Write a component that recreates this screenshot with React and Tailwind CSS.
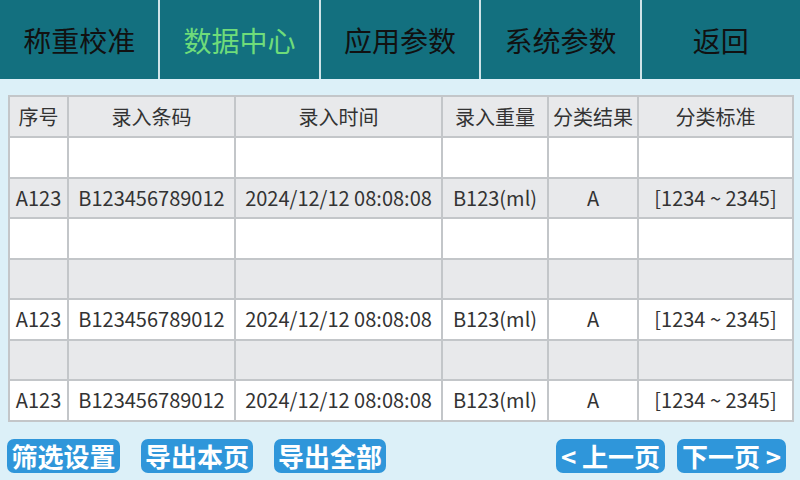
const tabs = ["称重校准", "数据中心", "应用参数", "系统参数", "返回"];

const cols = [
  { title: "序号", w: "w-[59px]" },
  { title: "录入条码", w: "w-[167px]" },
  { title: "录入时间", w: "w-[207px]" },
  { title: "录入重量", w: "w-[106px]" },
  { title: "分类结果", w: "w-[90px]" },
  { title: "分类标准", w: "w-[155px]" },
];

const filled = ["A123", "B123456789012", "2024/12/12 08:08:08", "B123(ml)", "A", "[1234 ~ 2345]"];

// 7 data rows, some empty
const rows = [null, filled, null, null, filled, null, filled];

function Btn({ w, children }) {
  return (
    <button className={"h-[34px] rounded-[7px] bg-[#2f96da] text-white text-[26px] font-bold leading-none flex items-center justify-center " + w}>
      {children}
    </button>
  );
}

export default function App() {
  return (
    <div
      className="w-[800px] h-[480px] bg-[#dcf0f8] flex flex-col overflow-hidden"
      style={{ fontFamily: '"Noto Sans CJK SC", "Noto Sans", sans-serif' }}
    >
      {/* 顶部导航 */}
      <div className="h-[79px] bg-[#13707f] flex">
        {tabs.map((t, i) => (
          <div
            key={t}
            className={
              "flex-1 flex items-center justify-center text-[28px] " +
              (i > 0 ? "border-l-2 border-[#cfe4e8] " : "") +
              (i === 1 ? "text-[#6fdc7a]" : "text-[#111]")
            }
          >
            {t}
          </div>
        ))}
      </div>

      {/* 数据表 */}
      <div className="px-[8px] pt-[16px]">
        <table className="w-[784px] border-collapse table-fixed text-[20px] text-[#333]">
          <thead>
            <tr className="h-[41px] bg-[#e8e9eb]">
              {cols.map((c) => (
                <th key={c.title} className={"border-2 border-[#c3c6c9] font-normal text-center " + c.w}>
                  {c.title}
                </th>
              ))}
            </tr>
          </thead>
          <tbody>
            {rows.map((r, i) => (
              <tr key={i} className={"h-[40.5px] " + (i % 2 === 0 ? "bg-white" : "bg-[#e8e9eb]")}>
                {cols.map((c, j) => (
                  <td key={j} className="border-2 border-[#c3c6c9] text-center whitespace-nowrap p-0">
                    {r ? r[j] : ""}
                  </td>
                ))}
              </tr>
            ))}
          </tbody>
        </table>
      </div>

      {/* 底部按钮 */}
      <div className="mt-auto mb-[7px] pl-[7px] pr-[14px] flex items-center">
        <div className="flex gap-[21px]">
          <Btn w="w-[113px]">筛选设置</Btn>
          <Btn w="w-[112px]">导出本页</Btn>
          <Btn w="w-[112px]">导出全部</Btn>
        </div>
        <div className="ml-auto flex gap-[12px]">
          <Btn w="w-[109px]">&lt; 上一页</Btn>
          <Btn w="w-[109px]">下一页 &gt;</Btn>
        </div>
      </div>
    </div>
  );
}
